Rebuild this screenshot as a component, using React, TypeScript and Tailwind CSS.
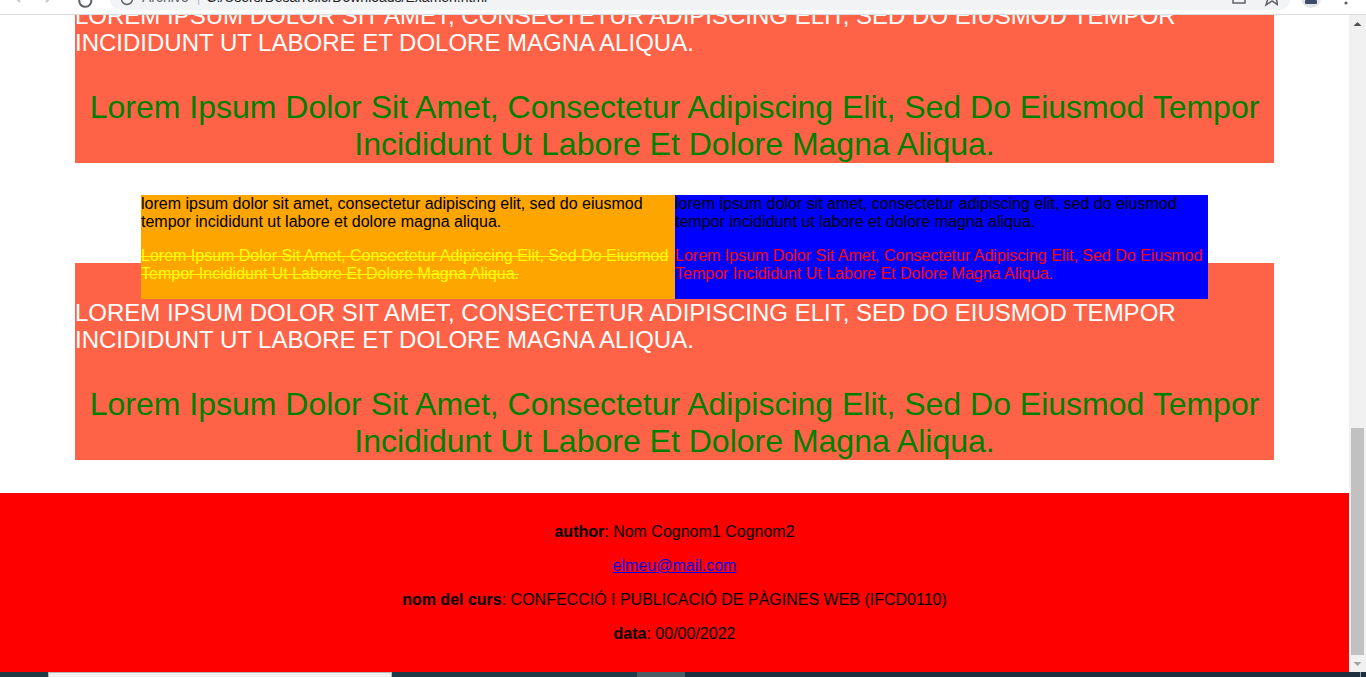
import React from "react";

const LOREM_LOWER =
  "lorem ipsum dolor sit amet, consectetur adipiscing elit, sed do eiusmod tempor incididunt ut labore et dolore magna aliqua.";

function ChromeTop() {
  return (
    <div className="h-[15px] shrink-0 bg-white border-b border-[#dadce0] overflow-hidden flex items-start">
      {/* nav icons */}
      <div className="w-[110px] h-[14px] shrink-0 flex items-start overflow-hidden">
        <svg width="110" height="14" viewBox="0 0 110 14">
          <path d="M20 -10 L14 -4 L20 2" stroke="#c4c7c5" strokeWidth="2" fill="none" />
          <path d="M46 -10 L52 -4 L46 2" stroke="#c4c7c5" strokeWidth="2" fill="none" />
          <path d="M80 -2 A6 6 0 1 0 91 -1" stroke="#5f6368" strokeWidth="2" fill="none" />
        </svg>
      </div>
      <div className="h-[10px] w-[1180px] shrink-0 bg-[#f1f3f4] rounded-br-[10px] rounded-bl-[10px] flex items-end overflow-hidden pl-[10px] pr-[12px]">
        <svg width="16" height="10" viewBox="0 0 16 10" className="shrink-0">
          <circle cx="7" cy="-1" r="5.5" stroke="#5f6368" strokeWidth="1.5" fill="none" />
        </svg>
        <div className="ml-[6px] mb-[5px] text-[14px] leading-[16px] text-[#5f6368] whitespace-nowrap">Archivo</div>
        <div className="ml-[8px] mb-[5px] text-[14px] leading-[16px] text-[#bdc1c6]">|</div>
        <div className="ml-[6px] mb-[5px] text-[14px] leading-[16px] text-[#202124] whitespace-nowrap">
          C:/Users/Desarrollo/Downloads/Examen.html
        </div>
        <div className="flex-1" />
        <svg width="50" height="10" viewBox="0 0 50 10" className="shrink-0">
          <rect x="5" y="-8" width="12" height="11" stroke="#5f6368" strokeWidth="1.5" fill="none" />
          <path d="M44 -10 L46.5 -3 L54 -3 L48 1.5 L50 8 L44 4 L38 8 L40 1.5 L34 -3 L41.5 -3 Z" fill="none" stroke="#5f6368" strokeWidth="1.5" transform="translate(0,-3)" />
        </svg>
      </div>
      <div className="flex-1 h-[14px] flex items-start overflow-hidden">
        <svg width="76" height="14" viewBox="0 0 76 14">
          <circle cx="21" cy="-2" r="10" fill="#e3e5e8" />
          <rect x="15" y="0" width="12" height="4" rx="1" fill="#3c4a6b" />
          <circle cx="56" cy="3" r="1.6" fill="#5f6368" />
        </svg>
      </div>
    </div>
  );
}

function Scrollbar() {
  return (
    <div className="w-[17px] shrink-0 bg-[#f1f1f1] flex flex-col">
      <div className="h-[17px] flex items-center justify-center">
        <svg width="9" height="6" viewBox="0 0 9 6">
          <path d="M0.5 5 L4.5 1 L8.5 5 Z" fill="#505050" />
        </svg>
      </div>
      <div className="flex-1" />
      <div className="h-[227px] mx-[2px] bg-[#c1c1c1]" />
      <div className="h-[17px] flex items-center justify-center">
        <svg width="9" height="6" viewBox="0 0 9 6">
          <path d="M0.5 1 L4.5 5 L8.5 1 Z" fill="#a3a3a3" />
        </svg>
      </div>
    </div>
  );
}

function Taskbar() {
  return (
    <div className="h-[5px] shrink-0 flex bg-[#1d2b3a]">
      <div className="w-[48px] bg-[#213a44]" />
      <div className="w-[344px] bg-[#f0f0f0] border-t border-l border-r border-[#b8b8b8]" />
      <div className="w-[245px] bg-[#223a45]" />
      <div className="w-[48px] bg-[#4c5d66]" />
      <div className="flex-1 bg-[#1f2f3f]" />
      <div className="w-[1px] bg-[#9aa3aa]" />
      <div className="w-[5px] bg-[#1f2f3f]" />
    </div>
  );
}

function TomatoBlock({ first }: { first?: boolean }) {
  return (
    <div
      className={
        first
          ? "mx-[75px] bg-[#ff6347]"
          : "mx-[75px] bg-[#ff6347] -mt-[36px] pt-[36px]"
      }
    >
      <p className="text-[24px] leading-[27px] text-white uppercase">{LOREM_LOWER}</p>
      <p className="mt-[33px] text-[32px] leading-[37px] text-[#008000] capitalize text-center">
        {LOREM_LOWER}
      </p>
    </div>
  );
}

export default function App() {
  return (
    <div
      className="w-[1366px] h-[677px] overflow-hidden flex flex-col bg-white text-black"
      style={{ fontFamily: "'Liberation Sans', Arial, sans-serif" }}
    >
      <ChromeTop />
      <div className="flex flex-1 min-h-0">
        <div className="flex-1 overflow-hidden">
          <div className="-mt-[13px]">
            <TomatoBlock first />
            <div className="relative z-10 mt-[32px] flex justify-center">
              <div className="w-[534px] bg-[#ffa500] text-[16px] leading-[18px]">
                <div>{LOREM_LOWER}</div>
                <p className="my-[16px] text-[#ffff00] capitalize line-through">{LOREM_LOWER}</p>
              </div>
              <div className="w-[533px] bg-[#0000ff] text-[16px] leading-[18px]">
                <div>{LOREM_LOWER}</div>
                <p className="my-[16px] text-[#ff0000] capitalize">{LOREM_LOWER}</p>
              </div>
            </div>
            <TomatoBlock />
            <footer className="mt-[33px] bg-[#ff0000] pt-[30px] pb-[40px] text-center text-[16px] leading-[18px]">
              <p>
                <b>author</b>: Nom Cognom1 Cognom2
              </p>
              <p className="mt-[16px]">
                <a href="#" className="text-[#0000ee] underline">
                  elmeu@mail.com
                </a>
              </p>
              <p className="mt-[16px]">
                <b>nom del curs</b>: CONFECCIÓ I PUBLICACIÓ DE PÀGINES WEB (IFCD0110)
              </p>
              <p className="mt-[16px]">
                <b>data</b>: 00/00/2022
              </p>
            </footer>
          </div>
        </div>
        <Scrollbar />
      </div>
      <Taskbar />
    </div>
  );
}
